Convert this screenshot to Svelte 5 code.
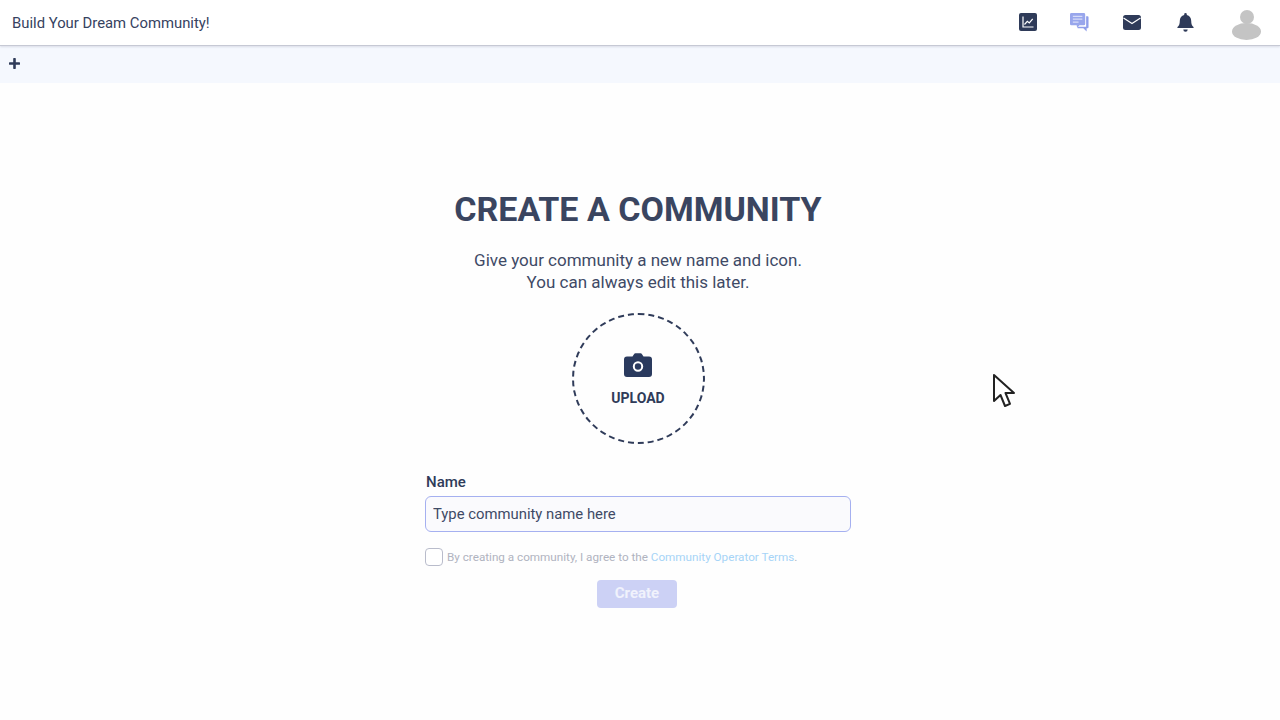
<script>
  let name = $state('');
  let agreed = $state(false);
</script>

<div class="page">
  <header class="topbar">
    <div class="title">Build Your Dream Community!</div>
    <nav class="icons">
      <button class="icon-btn stats" aria-label="Stats">
        <svg width="18" height="18" viewBox="0 0 18 18">
          <rect width="18" height="18" rx="2" fill="#2f3b59" />
          <path d="M4 3.5V14h10.5" fill="none" stroke="#fff" stroke-width="1.2" />
          <path d="M5.5 11.5l2.8-3.2 2 1.7 3.4-4.2" fill="none" stroke="#fff" stroke-width="1.2" />
        </svg>
      </button>
      <button class="icon-btn chat" aria-label="Chat">
        <svg width="19" height="19" viewBox="0 0 20 20">
          <path d="M17 3.500h1.500a1 1 0 0 1 1 1V15a1 1 0 0 1-1 1H17.500v3.500L14 16H8v-1.500h9z" fill="#8f9eea" />
          <path d="M1.5 0h13A1.5 1.5 0 0 1 16 1.5v10a1.5 1.5 0 0 1-1.500 1.500H10l-2.500 2.600L7 13H1.500A1.500 1.500 0 0 1 0 11.500v-10A1.500 1.500 0 0 1 1.500 0z" fill="#98a6ec" />
          <path d="M3 3.500h10M3 6.500h10M3 9.500h6" stroke="#d6dcf8" stroke-width="1.300" />
        </svg>
      </button>
      <button class="icon-btn" aria-label="Mail">
        <svg width="18" height="15" viewBox="0 0 18 15">
          <rect width="18" height="15" rx="2.500" fill="#2f3b59" />
          <path d="M0.500 3L9 8.500l8.500-5.500" fill="none" stroke="#fff" stroke-width="1.200" />
        </svg>
      </button>
      <button class="icon-btn" aria-label="Notifications">
        <svg width="17" height="19" viewBox="0 0 17 19">
          <path d="M8.500 0a1.300 1.300 0 0 1 1.300 1.300v.7c2.700.6 4.400 2.900 4.400 5.700 0 3.500.8 4.800 2.300 6.400.3.400.1 1-.5 1H1c-.6 0-.8-.6-.5-1 1.500-1.600 2.300-2.900 2.300-6.400 0-2.800 1.700-5.100 4.400-5.700v-.7A1.300 1.300 0 0 1 8.500 0z" fill="#2f3b59" />
          <path d="M6.300 16.500h4.400a2.200 2.200 0 0 1-4.400 0z" fill="#2f3b59" />
        </svg>
      </button>
      <div class="avatar" aria-hidden="true">
        <span class="head"></span>
        <span class="body"></span>
      </div>
    </nav>
  </header>

  <div class="subbar">
    <svg width="11" height="11" viewBox="0 0 11 11">
      <path d="M5.500 1v9M1 5.500h9" stroke="#2f3b59" stroke-width="2.600" stroke-linecap="round" />
    </svg>
  </div>

  <main class="main">
    <h1>CREATE A COMMUNITY</h1>
    <p class="lead">Give your community a new name and icon.<br />You can always edit this later.</p>

    <button class="upload">
      <svg width="28" height="24" viewBox="0 0 28 24">
        <path d="M3 3.500h5.500L10 1.200C10.300.600 10.800.300 11.500.300h5c.7 0 1.200.300 1.500.900l1.500 2.300H25a3 3 0 0 1 3 3V21a3 3 0 0 1-3 3H3a3 3 0 0 1-3-3V6.500a3 3 0 0 1 3-3z" fill="#2a3a5e" />
        <circle cx="14" cy="13.500" r="4.200" fill="none" stroke="#fff" stroke-width="2" />
      </svg>
      <span>UPLOAD</span>
    </button>

    <form class="form">
      <label for="cname">Name</label>
      <input id="cname" type="text" placeholder="Type community name here" bind:value={name} />
      <div class="terms">
        <input class="check" type="checkbox" bind:checked={agreed} aria-label="Agree" />
        <span>By creating a community, I agree to the <a href="#terms">Community Operator Terms</a>.</span>
      </div>
      <button class="create" type="button" disabled={!agreed}>Create</button>
    </form>
  </main>

  <svg class="cursor" width="24" height="36" viewBox="0 0 24 36">
    <path d="M2 2v26l6.500-6 4.500 11 5-2.200-4.500-10.800h8.500z" fill="#fff" stroke="#222" stroke-width="2" stroke-linejoin="round" />
  </svg>
</div>

<style>
  :global(body) {
    margin: 0;
    background: #fefefe;
  }

  .page {
    position: relative;
    height: 720px;
    overflow: hidden;
    font-family: Roboto, "Liberation Sans", sans-serif;
    color: #3a4560;
  }

  .topbar {
    height: 46px;
    box-sizing: border-box;
    padding: 0 12px;
    display: flex;
    align-items: center;
    justify-content: space-between;
    background: #fff;
    border-bottom: 1px solid #c6c9d4;
    box-shadow: 0 1px 2px rgba(60, 70, 100, 0.15);
    position: relative;
  }

  .title {
    font-size: 14.85px;
    color: #36425f;
  }

  .icons {
    display: flex;
    align-items: center;
  }

  .icon-btn {
    width: 18px;
    height: 20px;
    margin-right: 35px;
    padding: 0;
    border: 0;
    background: none;
    display: flex;
    align-items: center;
    justify-content: center;
  }

  .icon-btn svg {
    flex-shrink: 0;
  }

  .stats {
    margin-bottom: 1px;
  }

  .chat {
    margin-left: -2px;
  }

  .avatar {
    width: 29px;
    margin-left: 3px;
    margin-right: 7px;
    display: flex;
    flex-direction: column;
    align-items: center;
    padding-top: 4px;
  }

  .head {
    width: 14px;
    height: 14px;
    border-radius: 50%;
    background: #c4c4c4;
  }

  .body {
    width: 29px;
    height: 17px;
    margin-top: -1px;
    border-radius: 50%;
    background: #c4c4c4;
  }

  .subbar {
    height: 37px;
    box-sizing: border-box;
    padding: 0 9px 3px;
    display: flex;
    align-items: center;
    background: #f5f8fe;
  }

  .main {
    width: 1276px;
    display: flex;
    flex-direction: column;
    align-items: center;
  }

  h1 {
    margin: 105px 0 0;
    font-size: 34px;
    line-height: 42px;
    font-weight: 700;
    color: #3a4560;
  }

  .lead {
    margin: 19px 0 0;
    font-size: 17px;
    line-height: 22px;
    text-align: center;
    color: #3f4a66;
  }

  .upload {
    width: 133px;
    height: 131px;
    margin-top: 20px;
    padding: 2px 0 0;
    box-sizing: border-box;
    border: 2px dashed #2f3b59;
    border-radius: 50%;
    background: none;
    display: flex;
    flex-direction: column;
    align-items: center;
    justify-content: center;
    gap: 13px;
    font-family: inherit;
    font-size: 14px;
    font-weight: 700;
    color: #2f3b59;
  }

  .form {
    width: 426px;
    margin-top: 28px;
    display: flex;
    flex-direction: column;
  }

  label {
    padding-left: 1px;
    font-size: 15px;
    font-weight: 500;
    line-height: 20px;
    color: #2f3b59;
  }

  #cname {
    height: 36px;
    margin-top: 4px;
    padding: 0 7px;
    box-sizing: border-box;
    border: 1px solid #a5b0f0;
    border-radius: 6px;
    background: #fafafd;
    font-family: inherit;
    font-size: 14.85px;
    color: #3a4560;
    outline: none;
  }

  #cname::placeholder {
    color: #3f4a66;
    opacity: 1;
  }

  .terms {
    margin-top: 16px;
    display: flex;
    align-items: center;
    gap: 4px;
    font-size: 11.7px;
    color: #b0b3c0;
  }

  .check {
    appearance: none;
    width: 18px;
    height: 18px;
    margin: 0;
    border: 1px solid #b9bccb;
    border-radius: 4px;
    background: #fff;
  }

  .terms a {
    color: #a6d4f7;
    text-decoration: none;
  }

  .create {
    align-self: center;
    width: 80px;
    height: 28px;
    margin-top: 14px;
    margin-left: -2px;
    padding: 0 0 3px;
    border: 0;
    border-radius: 4px;
    background: #ccd1f5;
    font-family: inherit;
    font-size: 15px;
    font-weight: 700;
    color: #f0f2fc;
  }

  /* mouse pointer caught in the capture */
  .cursor {
    position: absolute;
    left: 992px;
    top: 373px;
  }
</style>
